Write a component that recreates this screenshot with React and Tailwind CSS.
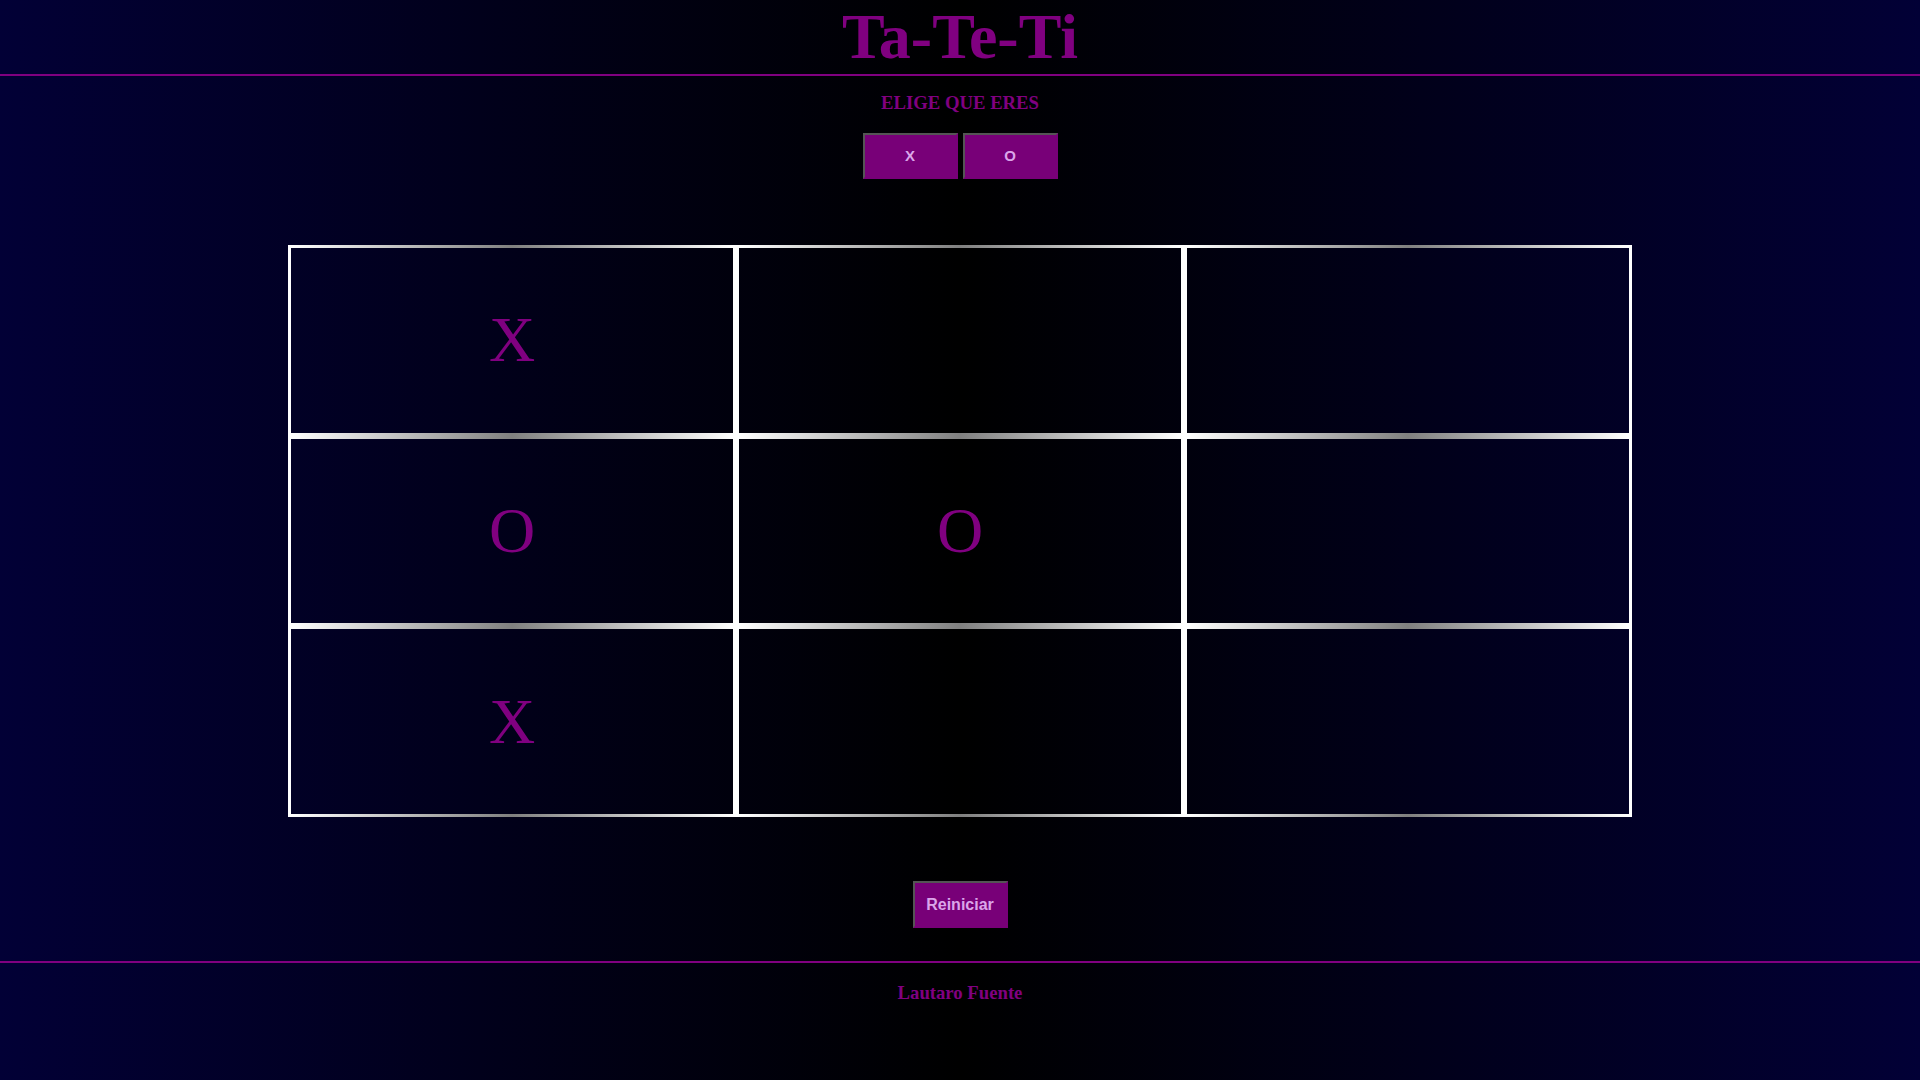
import React, { useState } from 'react';

const serif = { fontFamily: '"Liberation Serif", "Times New Roman", serif' };

const startBoard = [ 'X', '', '', 'O', 'O', '', 'X', '', '' ];

function Cell( { value, onClick } )
{
  return (
    <div
      onClick={ onClick }
      className="flex items-center justify-center border-[3px] border-solid [border-image:linear-gradient(to_right,#ffffff,#808080,#ffffff)_1] cursor-pointer text-[64px] leading-none text-[#800080] font-['Liberation_Serif',serif]"
    >
      { value }
    </div>
  );
}

export default function App()
{
  const [ board, setBoard ] = useState( startBoard );
  const [ player, setPlayer ] = useState( 'X' );

  const play = ( i ) =>
  {
    if ( board[ i ] ) return;
    const next = [ ...board ];
    next[ i ] = player;
    setBoard( next );
    setPlayer( player === 'X' ? 'O' : 'X' );
  };

  const choiceBtn = "w-[95px] h-[46px] bg-[#780078] text-[#dba6ea] text-[15px] font-bold border-2 border-solid border-t-[#555555] border-l-[#555555] border-r-[#780078] border-b-[#780078] font-['Liberation_Sans',Arial,sans-serif]";

  return (
    <div className="min-h-screen bg-[linear-gradient(to_right,#020036,#000000,#020036)]" style={ serif }>
      <header className="border-b-2 border-[#800080]">
        <h1 className="text-center text-[64px] font-bold leading-[74px] text-[#800080]">Ta-Te-Ti</h1>
      </header>

      <h3 className="mt-[16px] mb-[20px] text-center text-[18.72px] font-bold leading-[21px] text-[#800080]">ELIGE QUE ERES</h3>
      <div className="flex justify-center gap-[5px]">
        <button className={ choiceBtn } onClick={ () => setPlayer( 'X' ) }>X</button>
        <button className={ choiceBtn } onClick={ () => setPlayer( 'O' ) }>O</button>
      </div>

      <div className="mx-auto mt-[66px] grid h-[572px] w-[1344px] grid-cols-3 grid-rows-3">
        { board.map( ( v, i ) => (
          <Cell key={ i } value={ v } onClick={ () => play( i ) } />
        ) ) }
      </div>

      <div className="mt-[64px] flex justify-center">
        <button
          onClick={ () => setBoard( [ '', '', '', '', '', '', '', '', '' ] ) }
          className="w-[95px] h-[47px] bg-[#780078] text-[#dba6ea] text-[16px] font-bold border-2 border-solid border-t-[#555555] border-l-[#555555] border-r-[#780078] border-b-[#780078] font-['Liberation_Sans',Arial,sans-serif]"
        >
          Reiniciar
        </button>
      </div>

      <footer className="mt-[33px] border-t-2 border-[#800080] pt-[19px] pb-[60px]">
        <h3 className="text-center text-[18.72px] font-bold leading-[21px] text-[#800080]">Lautaro Fuente</h3>
      </footer>
    </div>
  );
}
